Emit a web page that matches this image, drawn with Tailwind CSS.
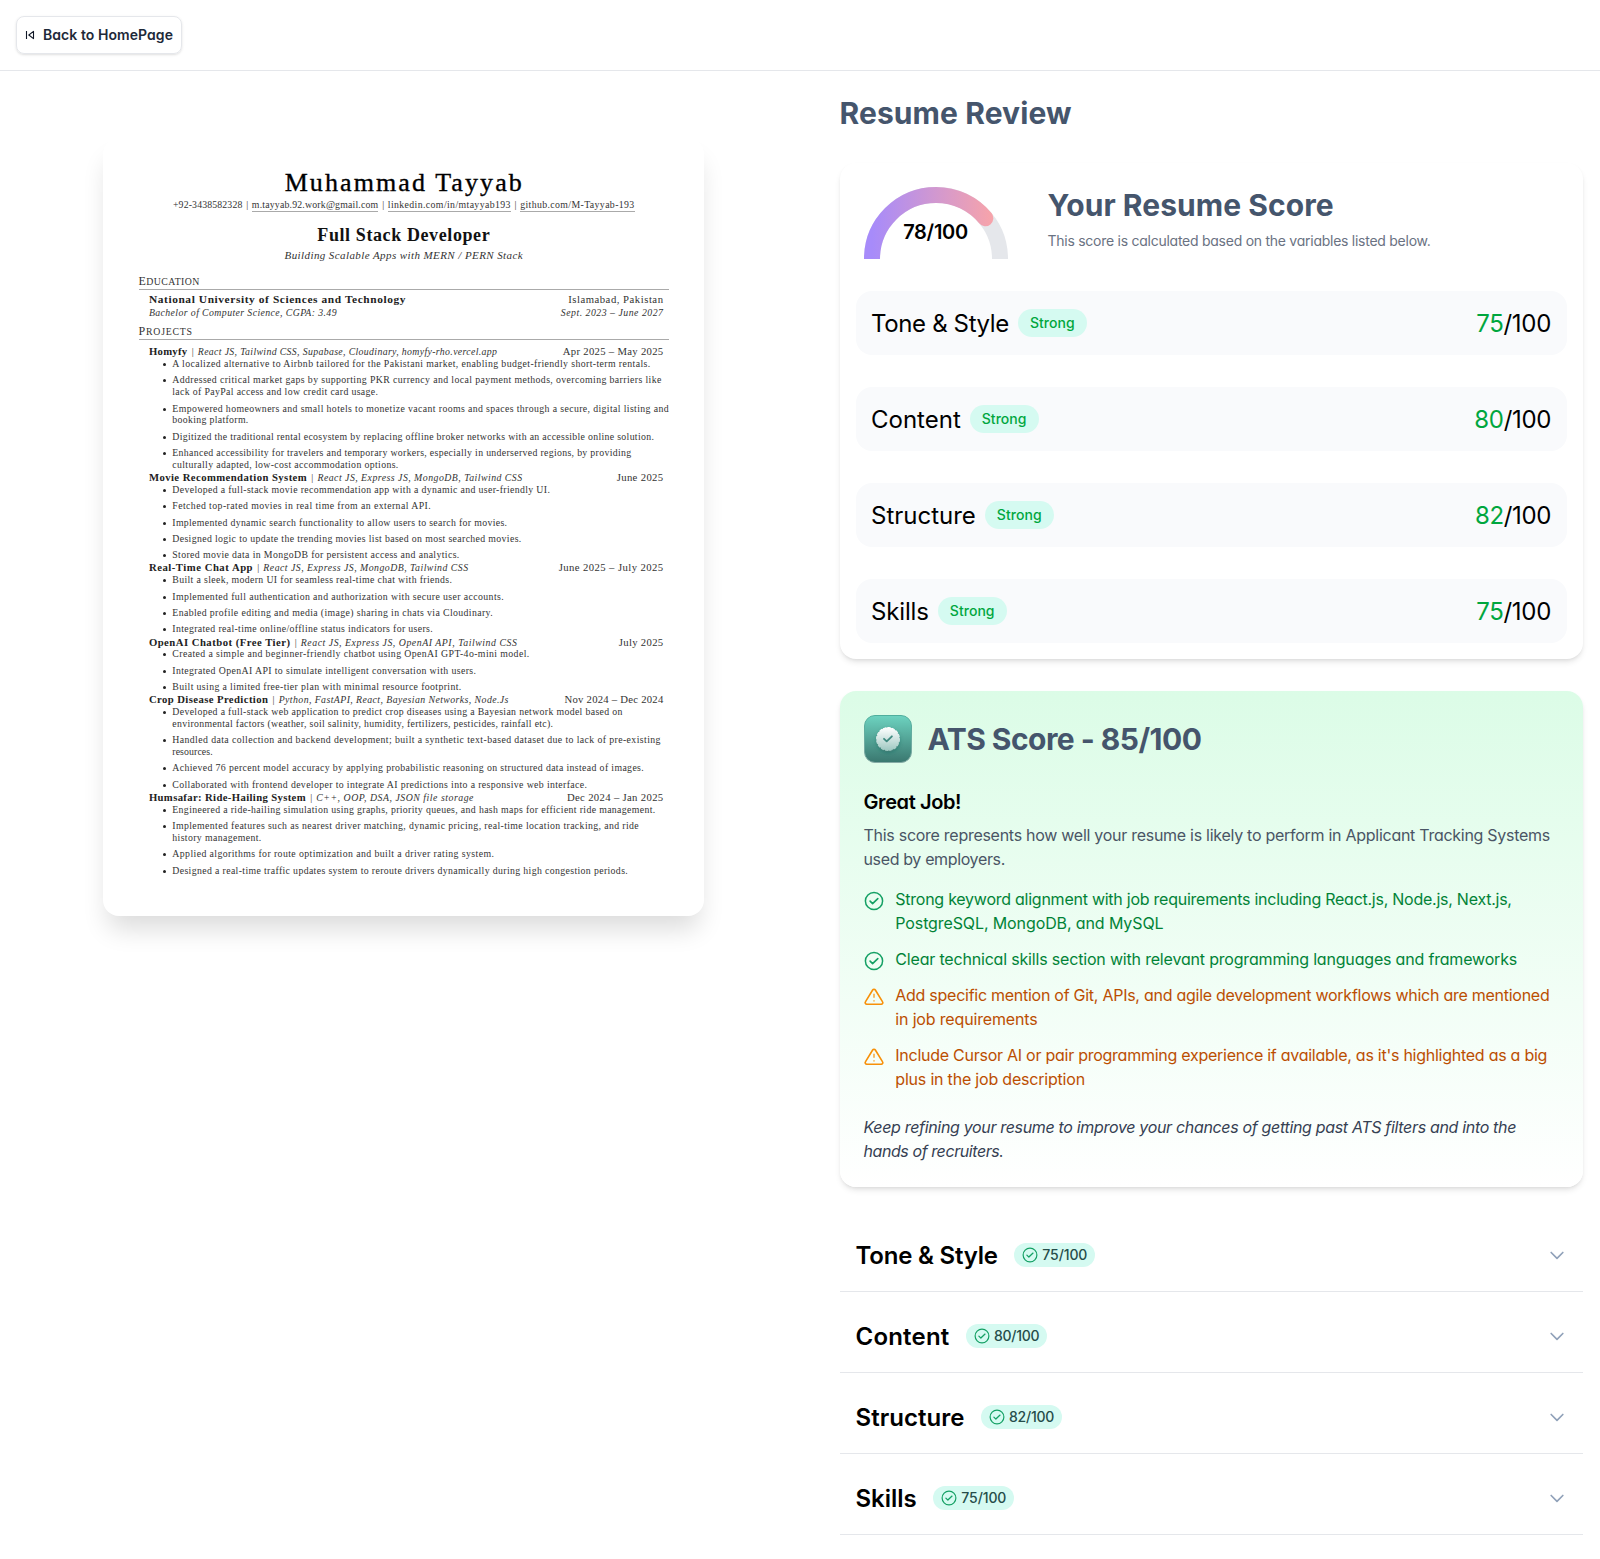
<!DOCTYPE html>
<html lang="en">
<head>
<meta charset="utf-8">
<title>Resume Review</title>
<script src="https://cdn.jsdelivr.net/npm/@tailwindcss/browser@4"></script>
</head>
<body class="bg-white text-black font-['Inter',sans-serif] [font-feature-settings:'cv11'] min-h-[1559px] overflow-x-hidden">

<svg class="hidden">
  <symbol id="check" viewBox="0 0 20 20" fill="none"><circle cx="10" cy="10" r="8.6" stroke="currentColor" stroke-width="1.5"/><path d="M6.1 10.1l2.5 2.5 5.2-5" stroke="currentColor" stroke-width="1.6" stroke-linecap="round" stroke-linejoin="round"/></symbol>
  <symbol id="warn" viewBox="0 0 20 20" fill="none"><path d="M8.65 3 1.55 14.7a1.6 1.6 0 0 0 1.35 2.6h14.2a1.6 1.6 0 0 0 1.35-2.6L11.35 3a1.57 1.57 0 0 0-2.7 0z" stroke="currentColor" stroke-width="1.6" stroke-linejoin="round"/><path d="M10 6.8v4M10 13.2v1.4" stroke="currentColor" stroke-width="1.5" opacity=".8"/></symbol>
  <symbol id="chevron" viewBox="0 0 24 24" fill="none"><path d="M19 9l-7 7-7-7" stroke="currentColor" stroke-width="2" stroke-linecap="round" stroke-linejoin="round"/></symbol>
</svg>

<nav class="flex p-4 border-b border-gray-200">
  <a class="flex items-center gap-2 p-2 border border-gray-200 rounded-lg shadow-sm">
    <svg class="w-[10px] h-[10px]" viewBox="0 0 10 10" fill="none" stroke="#111827" stroke-width="1.1" stroke-linejoin="round"><path d="M1.5 1v8M8.5 1.4v7.2L3.8 5z"/></svg>
    <span class="text-sm font-semibold text-gray-800 tracking-[0.06px]">Back to HomePage</span>
  </a>
</nav>

<div class="flex items-start">
  <section class="w-[807px] shrink-0 flex justify-center pt-[67px]">
    <article class="w-[601px] h-[778px] rounded-2xl bg-white shadow-[0_18px_26px_-5px_rgba(0,0,0,0.14)] pt-[29.7px] pl-[35.6px] pr-[35px] font-['Liberation_Serif',serif] text-[9.8px] leading-[11.8px] text-[#333] whitespace-nowrap">
      <h1 class="text-center text-[26px] leading-[30px] text-black tracking-[2.1px] pl-[1px] [-webkit-text-stroke:0.35px_black]">Muhammad Tayyab</h1>
      <div class="flex justify-center gap-[3.7px] leading-[12px] mt-[1.5px]">
        <span class="tracking-[0.14px]">+92-3438582328</span><span>|</span>
        <span class="tracking-[0.19px] border-b border-[#aaa]">m.tayyab.92.work@gmail.com</span><span>|</span>
        <span class="tracking-[0.39px] border-b border-[#aaa]">linkedin.com/in/mtayyab193</span><span>|</span>
        <span class="tracking-[0.38px] border-b border-[#aaa]">github.com/M-Tayyab-193</span>
      </div>
      <h2 class="text-center font-bold text-[18px] leading-[20px] text-[#111] tracking-[0.6px] mt-[13.3px]">Full Stack Developer</h2>
      <p class="text-center italic text-[11px] leading-[14px] tracking-[0.41px] mt-[2.8px]">Building Scalable Apps with MERN / PERN Stack</p>

      <h3 class="text-[9.8px] leading-[14px] mt-[11.3px] border-b border-[#aaa] tracking-[0.42px]"><span class="text-[12px]">E</span>DUCATION</h3>
      <div class="flex justify-between mt-[3.4px] pl-[10.3px] pr-[5.5px] leading-[13.3px]">
        <div>
          <p class="font-bold text-[11.4px] tracking-[0.59px] text-[#222]">National University of Sciences and Technology</p>
          <p class="italic tracking-[0.4px]">Bachelor of Computer Science, CGPA: 3.49</p>
        </div>
        <div class="text-right">
          <p class="text-[10.7px] tracking-[0.52px]">Islamabad, Pakistan</p>
          <p class="italic tracking-[0.5px]">Sept. 2023 – June 2027</p>
        </div>
      </div>
      <h3 class="text-[9.8px] leading-[14px] mt-[4.4px] border-b border-[#aaa] tracking-[0.75px]"><span class="text-[12px]">P</span>ROJECTS</h3>

      <div class="mt-[4.9px] pl-[10.3px]">
        <div class="flex justify-between pr-[5.5px] pt-[1.3px]">
          <p class="flex"><b class="text-[10.7px] tracking-[0.3px] text-[#222]">Homyfy</b><span class="w-[10.3px] text-center">|</span><i class="tracking-[0.35px]">React JS, Tailwind CSS, Supabase, Cloudinary, homyfy-rho.vercel.app</i></p>
          <p class="text-[10.7px] tracking-[0.3px]">Apr 2025 – May 2025</p>
        </div>
        <ul class="flex flex-col gap-[4.6px] pl-[23.4px]">
          <li class="relative before:absolute before:-left-[9px] before:top-[5px] before:size-[3px] before:rounded-full before:bg-[#222]"><span class="block tracking-[0.403px]">A localized alternative to Airbnb tailored for the Pakistani market, enabling budget-friendly short-term rentals.</span></li>
          <li class="relative before:absolute before:-left-[9px] before:top-[5px] before:size-[3px] before:rounded-full before:bg-[#222]"><span class="block tracking-[0.389px]">Addressed critical market gaps by supporting PKR currency and local payment methods, overcoming barriers like</span><span class="block tracking-[0.354px]">lack of PayPal access and low credit card usage.</span></li>
          <li class="relative before:absolute before:-left-[9px] before:top-[5px] before:size-[3px] before:rounded-full before:bg-[#222]"><span class="block tracking-[0.379px]">Empowered homeowners and small hotels to monetize vacant rooms and spaces through a secure, digital listing and</span><span class="block tracking-[0.328px]">booking platform.</span></li>
          <li class="relative before:absolute before:-left-[9px] before:top-[5px] before:size-[3px] before:rounded-full before:bg-[#222]"><span class="block tracking-[0.324px]">Digitized the traditional rental ecosystem by replacing offline broker networks with an accessible online solution.</span></li>
          <li class="relative before:absolute before:-left-[9px] before:top-[5px] before:size-[3px] before:rounded-full before:bg-[#222]"><span class="block tracking-[0.33px]">Enhanced accessibility for travelers and temporary workers, especially in underserved regions, by providing</span><span class="block tracking-[0.363px]">culturally adapted, low-cost accommodation options.</span></li>
        </ul>

        <div class="flex justify-between pr-[5.5px] pt-[1.3px]">
          <p class="flex"><b class="text-[10.7px] tracking-[0.43px] text-[#222]">Movie Recommendation System</b><span class="w-[10.3px] text-center">|</span><i class="tracking-[0.479px]">React JS, Express JS, MongoDB, Tailwind CSS</i></p>
          <p class="text-[10.7px] tracking-[0.35px]">June 2025</p>
        </div>
        <ul class="flex flex-col gap-[4.6px] pl-[23.4px]">
          <li class="relative before:absolute before:-left-[9px] before:top-[5px] before:size-[3px] before:rounded-full before:bg-[#222]"><span class="block tracking-[0.356px]">Developed a full-stack movie recommendation app with a dynamic and user-friendly UI.</span></li>
          <li class="relative before:absolute before:-left-[9px] before:top-[5px] before:size-[3px] before:rounded-full before:bg-[#222]"><span class="block tracking-[0.421px]">Fetched top-rated movies in real time from an external API.</span></li>
          <li class="relative before:absolute before:-left-[9px] before:top-[5px] before:size-[3px] before:rounded-full before:bg-[#222]"><span class="block tracking-[0.334px]">Implemented dynamic search functionality to allow users to search for movies.</span></li>
          <li class="relative before:absolute before:-left-[9px] before:top-[5px] before:size-[3px] before:rounded-full before:bg-[#222]"><span class="block tracking-[0.357px]">Designed logic to update the trending movies list based on most searched movies.</span></li>
          <li class="relative before:absolute before:-left-[9px] before:top-[5px] before:size-[3px] before:rounded-full before:bg-[#222]"><span class="block tracking-[0.369px]">Stored movie data in MongoDB for persistent access and analytics.</span></li>
        </ul>

        <div class="flex justify-between pr-[5.5px] pt-[1.3px]">
          <p class="flex"><b class="text-[10.7px] tracking-[0.52px] text-[#222]">Real-Time Chat App</b><span class="w-[10.3px] text-center">|</span><i class="tracking-[0.479px]">React JS, Express JS, MongoDB, Tailwind CSS</i></p>
          <p class="text-[10.7px] tracking-[0.41px]">June 2025 – July 2025</p>
        </div>
        <ul class="flex flex-col gap-[4.6px] pl-[23.4px]">
          <li class="relative before:absolute before:-left-[9px] before:top-[5px] before:size-[3px] before:rounded-full before:bg-[#222]"><span class="block tracking-[0.359px]">Built a sleek, modern UI for seamless real-time chat with friends.</span></li>
          <li class="relative before:absolute before:-left-[9px] before:top-[5px] before:size-[3px] before:rounded-full before:bg-[#222]"><span class="block tracking-[0.396px]">Implemented full authentication and authorization with secure user accounts.</span></li>
          <li class="relative before:absolute before:-left-[9px] before:top-[5px] before:size-[3px] before:rounded-full before:bg-[#222]"><span class="block tracking-[0.376px]">Enabled profile editing and media (image) sharing in chats via Cloudinary.</span></li>
          <li class="relative before:absolute before:-left-[9px] before:top-[5px] before:size-[3px] before:rounded-full before:bg-[#222]"><span class="block tracking-[0.358px]">Integrated real-time online/offline status indicators for users.</span></li>
        </ul>

        <div class="flex justify-between pr-[5.5px] pt-[1.3px]">
          <p class="flex"><b class="text-[10.7px] tracking-[0.48px] text-[#222]">OpenAI Chatbot (Free Tier)</b><span class="w-[10.3px] text-center">|</span><i class="tracking-[0.539px]">React JS, Express JS, OpenAI API, Tailwind CSS</i></p>
          <p class="text-[10.7px] tracking-[0.32px]">July 2025</p>
        </div>
        <ul class="flex flex-col gap-[4.6px] pl-[23.4px]">
          <li class="relative before:absolute before:-left-[9px] before:top-[5px] before:size-[3px] before:rounded-full before:bg-[#222]"><span class="block tracking-[0.403px]">Created a simple and beginner-friendly chatbot using OpenAI GPT-4o-mini model.</span></li>
          <li class="relative before:absolute before:-left-[9px] before:top-[5px] before:size-[3px] before:rounded-full before:bg-[#222]"><span class="block tracking-[0.391px]">Integrated OpenAI API to simulate intelligent conversation with users.</span></li>
          <li class="relative before:absolute before:-left-[9px] before:top-[5px] before:size-[3px] before:rounded-full before:bg-[#222]"><span class="block tracking-[0.377px]">Built using a limited free-tier plan with minimal resource footprint.</span></li>
        </ul>

        <div class="flex justify-between pr-[5.5px] pt-[1.3px]">
          <p class="flex"><b class="text-[10.7px] tracking-[0.41px] text-[#222]">Crop Disease Prediction</b><span class="w-[10.3px] text-center">|</span><i class="tracking-[0.425px]">Python, FastAPI, React, Bayesian Networks, Node.Js</i></p>
          <p class="text-[10.7px] tracking-[0.24px]">Nov 2024 – Dec 2024</p>
        </div>
        <ul class="flex flex-col gap-[4.6px] pl-[23.4px]">
          <li class="relative before:absolute before:-left-[9px] before:top-[5px] before:size-[3px] before:rounded-full before:bg-[#222]"><span class="block tracking-[0.346px]">Developed a full-stack web application to predict crop diseases using a Bayesian network model based on</span><span class="block tracking-[0.323px]">environmental factors (weather, soil salinity, humidity, fertilizers, pesticides, rainfall etc).</span></li>
          <li class="relative before:absolute before:-left-[9px] before:top-[5px] before:size-[3px] before:rounded-full before:bg-[#222]"><span class="block tracking-[0.402px]">Handled data collection and backend development; built a synthetic text-based dataset due to lack of pre-existing</span><span class="block tracking-[0.105px]">resources.</span></li>
          <li class="relative before:absolute before:-left-[9px] before:top-[5px] before:size-[3px] before:rounded-full before:bg-[#222]"><span class="block tracking-[0.366px]">Achieved 76 percent model accuracy by applying probabilistic reasoning on structured data instead of images.</span></li>
          <li class="relative before:absolute before:-left-[9px] before:top-[5px] before:size-[3px] before:rounded-full before:bg-[#222]"><span class="block tracking-[0.372px]">Collaborated with frontend developer to integrate AI predictions into a responsive web interface.</span></li>
        </ul>

        <div class="flex justify-between pr-[5.5px] pt-[1.3px]">
          <p class="flex"><b class="text-[10.7px] tracking-[0.36px] text-[#222]">Humsafar: Ride-Hailing System</b><span class="w-[10.3px] text-center">|</span><i class="tracking-[0.524px]">C++, OOP, DSA, JSON file storage</i></p>
          <p class="text-[10.7px] tracking-[0.33px]">Dec 2024 – Jan 2025</p>
        </div>
        <ul class="flex flex-col gap-[4.6px] pl-[23.4px]">
          <li class="relative before:absolute before:-left-[9px] before:top-[5px] before:size-[3px] before:rounded-full before:bg-[#222]"><span class="block tracking-[0.355px]">Engineered a ride-hailing simulation using graphs, priority queues, and hash maps for efficient ride management.</span></li>
          <li class="relative before:absolute before:-left-[9px] before:top-[5px] before:size-[3px] before:rounded-full before:bg-[#222]"><span class="block tracking-[0.383px]">Implemented features such as nearest driver matching, dynamic pricing, real-time location tracking, and ride</span><span class="block tracking-[0.379px]">history management.</span></li>
          <li class="relative before:absolute before:-left-[9px] before:top-[5px] before:size-[3px] before:rounded-full before:bg-[#222]"><span class="block tracking-[0.408px]">Applied algorithms for route optimization and built a driver rating system.</span></li>
          <li class="relative before:absolute before:-left-[9px] before:top-[5px] before:size-[3px] before:rounded-full before:bg-[#222]"><span class="block tracking-[0.365px]">Designed a real-time traffic updates system to reroute drivers dynamically during high congestion periods.</span></li>
        </ul>
      </div>
    </article>
  </section>

  <section class="ml-[33px] w-[743px] shrink-0 pt-6 flex flex-col gap-8 whitespace-nowrap">
    <h2 class="text-[30px] leading-9 font-bold text-slate-600 tracking-[0.1px] -ml-[0.5px]">Resume Review</h2>

    <div class="rounded-2xl shadow-md bg-white p-4 flex flex-col gap-8">
      <div class="flex items-center gap-8">
        <div class="relative w-40 h-20">
          <svg class="w-full h-full" viewBox="0 0 100 50">
            <defs><linearGradient id="arc" x1="0" x2="1" y1="0" y2="0"><stop offset="0" stop-color="#a78bfa"/><stop offset="1" stop-color="#fca5a5"/></linearGradient></defs>
            <path d="M10,50 A40,40 0 0 1 90,50" fill="none" stroke="#e5e7eb" stroke-width="10" stroke-linecap="round"/>
            <path d="M10,50 A40,40 0 0 1 90,50" fill="none" stroke="url(#arc)" stroke-width="10" stroke-linecap="round" pathLength="100" stroke-dasharray="78 200"/>
          </svg>
          <div class="absolute inset-0 flex items-center justify-center pt-[25px] pr-[1px] text-xl font-semibold tracking-[-0.3px]">78/100</div>
        </div>
        <div class="flex flex-col gap-2">
          <h2 class="text-[30px] leading-9 font-bold text-slate-600 tracking-[0.06px] -ml-[0.5px]">Your Resume Score</h2>
          <p class="text-sm text-gray-500 tracking-[-0.26px] -ml-[0.5px]">This score is calculated based on the variables listed below.</p>
        </div>
      </div>

      <div class="flex items-center justify-between rounded-2xl bg-[#f9fafc] h-16 px-4">
        <div class="flex items-center gap-2"><p class="text-2xl pt-[2px] -ml-px pr-px tracking-[-0.36px]">Tone &amp; Style</p><span class="rounded-full bg-[#d5faf1] px-3 py-1 text-sm font-medium text-green-600 tracking-[0.05px]">Strong</span></div>
        <p class="text-2xl pt-[2px] tracking-[-0.3px]"><span class="text-green-600">75</span>/100</p>
      </div>
      <div class="flex items-center justify-between rounded-2xl bg-[#f9fafc] h-16 px-4">
        <div class="flex items-center gap-2"><p class="text-2xl pt-[2px] -ml-px pr-px">Content</p><span class="rounded-full bg-[#d5faf1] px-3 py-1 text-sm font-medium text-green-600 tracking-[0.05px]">Strong</span></div>
        <p class="text-2xl pt-[2px] tracking-[-0.33px]"><span class="text-green-600">80</span>/100</p>
      </div>
      <div class="flex items-center justify-between rounded-2xl bg-[#f9fafc] h-16 px-4">
        <div class="flex items-center gap-2"><p class="text-2xl pt-[2px] -ml-px pr-px">Structure</p><span class="rounded-full bg-[#d5faf1] px-3 py-1 text-sm font-medium text-green-600 tracking-[0.05px]">Strong</span></div>
        <p class="text-2xl pt-[2px] tracking-[-0.36px]"><span class="text-green-600">82</span>/100</p>
      </div>
      <div class="flex items-center justify-between rounded-2xl bg-[#f9fafc] h-16 px-4">
        <div class="flex items-center gap-2"><p class="text-2xl pt-[2px] -ml-px pr-px tracking-[-0.15px]">Skills</p><span class="rounded-full bg-[#d5faf1] px-3 py-1 text-sm font-medium text-green-600 tracking-[0.05px]">Strong</span></div>
        <p class="text-2xl pt-[2px] tracking-[-0.3px]"><span class="text-green-600">75</span>/100</p>
      </div>
    </div>

    <div class="rounded-2xl shadow-md bg-linear-to-b from-green-100 to-white p-6">
      <div class="flex items-center gap-4 mb-6">
        <svg class="w-12 h-12" viewBox="0 0 48 48" fill="none">
          <defs>
            <linearGradient id="tile" x1="0" x2="0" y1="0" y2="1"><stop offset="0" stop-color="#6dd3c0"/><stop offset="1" stop-color="#3a776f"/></linearGradient>
            <linearGradient id="edge" x1="0" x2="0" y1="0" y2="1"><stop offset="0" stop-color="#4fae9d"/><stop offset="1" stop-color="#86aba6"/></linearGradient>
            <linearGradient id="seal" x1="0" x2="0" y1="0" y2="1"><stop offset="0" stop-color="#fff"/><stop offset="1" stop-color="#9fc8c2"/></linearGradient>
            <filter id="soft" x="-50%" y="-50%" width="200%" height="200%"><feDropShadow dx="0" dy="2" stdDeviation="2" flood-color="#1f5a52" flood-opacity=".45"/></filter>
          </defs>
          <rect x=".5" y=".5" width="47" height="47" rx="10.5" fill="url(#tile)" stroke="url(#edge)" stroke-width="1"/>
          <circle cx="24" cy="24" r="11.4" fill="url(#seal)" filter="url(#soft)"/>
          <circle cx="24" cy="24" r="11.4" stroke="url(#seal)" stroke-width="1.2" stroke-dasharray="3.2 1.2"/>
          <path d="M20 23.8l2.7 2.6 5.2-5.1" stroke="#3f8a80" stroke-width="1.8" stroke-linecap="round" stroke-linejoin="round"/>
        </svg>
        <p class="text-[30px] leading-9 font-bold text-slate-600 tracking-[-0.54px] -ml-[0.5px]">ATS Score - 85/100</p>
      </div>
      <p class="text-xl font-semibold tracking-[-0.4px] pt-px mb-[7px] -ml-[0.5px]">Great Job!</p>
      <p class="text-gray-600 -ml-[0.5px]"><span class="block tracking-[-0.275px]">This score represents how well your resume is likely to perform in Applicant Tracking Systems</span><span class="block tracking-[-0.36px]">used by employers.</span></p>
      <div class="flex flex-col gap-3 mt-4">
        <div class="flex items-start gap-[11.3px] text-green-700"><svg class="w-5 h-5 mt-1 text-[#14a064]"><use href="#check"/></svg><p><span class="block tracking-[-0.25px]">Strong keyword alignment with job requirements including React.js, Node.js, Next.js,</span><span class="block tracking-[-0.11px]">PostgreSQL, MongoDB, and MySQL</span></p></div>
        <div class="flex items-start gap-[11.3px] text-green-700"><svg class="w-5 h-5 mt-1 text-[#14a064]"><use href="#check"/></svg><p class="tracking-[-0.182px]">Clear technical skills section with relevant programming languages and frameworks</p></div>
        <div class="flex items-start gap-[11.3px] text-amber-700"><svg class="w-5 h-5 mt-1 text-[#f79009]"><use href="#warn"/></svg><p><span class="block tracking-[-0.264px]">Add specific mention of Git, APIs, and agile development workflows which are mentioned</span><span class="block tracking-[-0.16px]">in job requirements</span></p></div>
        <div class="flex items-start gap-[11.3px] text-amber-700"><svg class="w-5 h-5 mt-1 text-[#f79009]"><use href="#warn"/></svg><p><span class="block tracking-[-0.256px]">Include Cursor AI or pair programming experience if available, as it's highlighted as a big</span><span class="block tracking-[-0.2px]">plus in the job description</span></p></div>
      </div>
      <p class="mt-6 italic text-gray-700 -ml-[0.5px]"><span class="block tracking-[-0.33px]">Keep refining your resume to improve your chances of getting past ATS filters and into the</span><span class="block tracking-[-0.42px]">hands of recruiters.</span></p>
    </div>

    <div class="flex flex-col gap-2">
      <div class="flex items-center justify-between h-[73px] px-4 border-b border-gray-200">
        <div class="flex items-center gap-4"><p class="text-2xl font-semibold pt-[2px] -ml-[0.5px] pr-[0.5px] tracking-[-0.2px]">Tone &amp; Style</p><span class="flex items-center gap-1 rounded-full bg-[#d5faf1] px-2 py-0.5 text-sm font-medium text-[#254d4a] tracking-[-0.1px]"><svg class="w-4 h-4 text-[#14a064]"><use href="#check"/></svg>75/100</span></div>
        <svg class="w-5 h-5 text-slate-400"><use href="#chevron"/></svg>
      </div>
      <div class="flex items-center justify-between h-[73px] px-4 border-b border-gray-200">
        <div class="flex items-center gap-4"><p class="text-2xl font-semibold pt-[2px] -ml-[0.5px] pr-[0.5px] tracking-[0.2px]">Content</p><span class="flex items-center gap-1 rounded-full bg-[#d5faf1] px-2 py-0.5 text-sm font-medium text-[#254d4a] tracking-[-0.25px]"><svg class="w-4 h-4 text-[#14a064]"><use href="#check"/></svg>80/100</span></div>
        <svg class="w-5 h-5 text-slate-400"><use href="#chevron"/></svg>
      </div>
      <div class="flex items-center justify-between h-[73px] px-4 border-b border-gray-200">
        <div class="flex items-center gap-4"><p class="text-2xl font-semibold pt-[2px] -ml-[0.5px] pr-[0.5px] tracking-[0.04px]">Structure</p><span class="flex items-center gap-1 rounded-full bg-[#d5faf1] px-2 py-0.5 text-sm font-medium text-[#254d4a] tracking-[-0.25px]"><svg class="w-4 h-4 text-[#14a064]"><use href="#check"/></svg>82/100</span></div>
        <svg class="w-5 h-5 text-slate-400"><use href="#chevron"/></svg>
      </div>
      <div class="flex items-center justify-between h-[73px] px-4 border-b border-gray-200">
        <div class="flex items-center gap-4"><p class="text-2xl font-semibold pt-[2px] -ml-[0.5px] pr-[0.5px]">Skills</p><span class="flex items-center gap-1 rounded-full bg-[#d5faf1] px-2 py-0.5 text-sm font-medium text-[#254d4a] tracking-[-0.1px]"><svg class="w-4 h-4 text-[#14a064]"><use href="#check"/></svg>75/100</span></div>
        <svg class="w-5 h-5 text-slate-400"><use href="#chevron"/></svg>
      </div>
    </div>
  </section>
</div>
</body>
</html>
